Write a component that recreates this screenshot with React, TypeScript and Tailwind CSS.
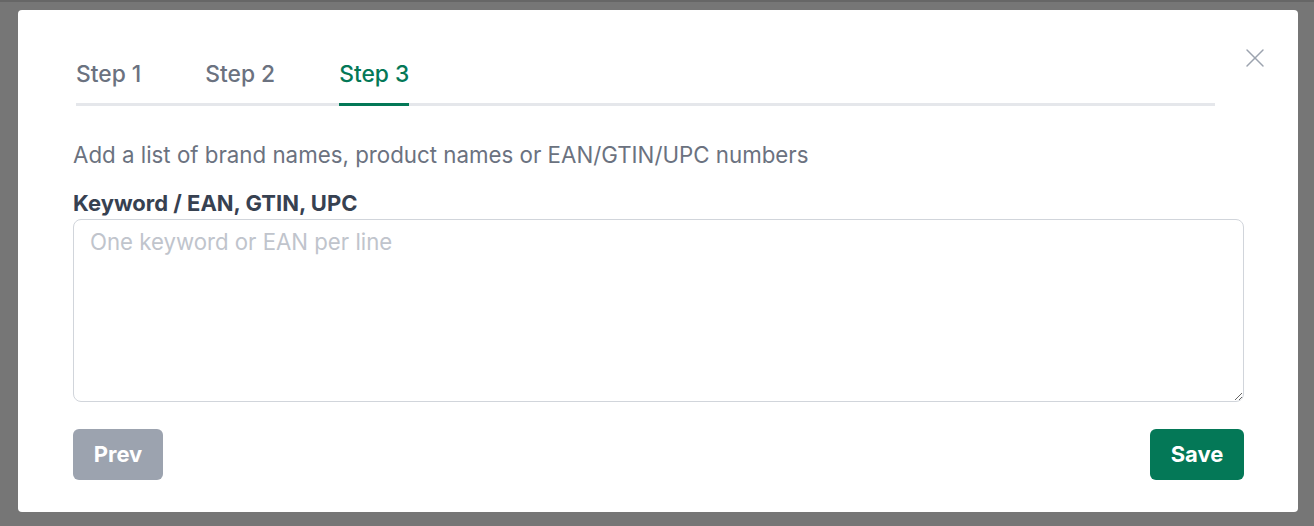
import { X } from 'lucide-react';

const TABS = ['Step 1', 'Step 2', 'Step 3'];

export default function App() {
  const active = 2;

  return (
    <div className="w-full h-[526px] bg-[#767676] border-t-2 border-[#666666] px-[18px] pt-[8px] font-['Inter',sans-serif]">
      <div className="relative w-[1280px] h-[502px] bg-white rounded-[4px] px-[55px] pt-[50px]">
        <button className="absolute right-[27px] top-[32px] text-[#9ca3af]">
          <X size={32} strokeWidth={1.1} />
        </button>

        <div className="ml-[3px] w-[1139px] flex gap-16 border-b-[3px] border-[#e5e7eb]">
          {TABS.map((tab, i) => (
            <div
              key={tab}
              className={`pb-[15px] -mb-[3px] border-b-[3px] text-[22.8px] leading-[28px] font-medium ${
                i === active ? 'border-[#047857] text-[#047857]' : 'border-transparent text-[#6b7280]'
              }`}
            >
              {tab}
            </div>
          ))}
        </div>

        <p className="mt-[35px] text-[22.3px] leading-[28px] text-[#6b7280]">
          Add a list of brand names, product names or EAN/GTIN/UPC numbers
        </p>

        <label className="block mt-[20px] text-[22px] leading-[28px] font-bold text-[#374151]">
          Keyword / EAN, GTIN, UPC
        </label>
        <textarea
          placeholder="One keyword or EAN per line"
          className="block mt-[2px] w-[1171px] h-[183px] rounded-lg border border-[#d1d5db] px-4 py-[8px] text-[22.2px] leading-[28px] text-[#374151] placeholder:text-[#c0c4cc] outline-none"
        />

        <div className="mt-[27px] flex justify-between w-[1171px]">
          <button className="w-[90px] h-[51px] rounded-md bg-[#9ca3af] text-white text-[22px] font-bold">
            Prev
          </button>
          <button className="w-[94px] h-[51px] rounded-md bg-[#047857] text-white text-[22px] font-bold">
            Save
          </button>
        </div>
      </div>
    </div>
  );
}
